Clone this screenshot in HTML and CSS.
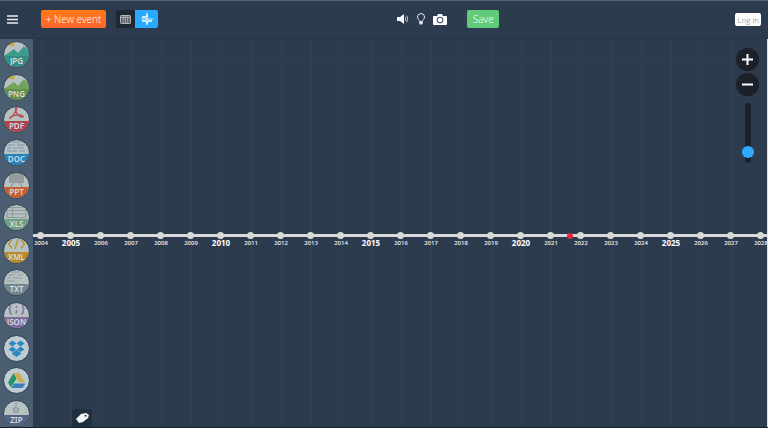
FILE: index.html
```html
<!DOCTYPE html>
<html lang="en">
<head>
<meta charset="utf-8">
<title>Timeline editor</title>
<link rel="stylesheet" href="styles.css">
</head>
<body>
<header class="topbar">
  <div class="group">
    <button class="icon-btn menu" aria-label="Menu"><svg width="11" height="9" viewBox="0 0 11 9"><path d="M0 1h11M0 4.500h11M0 8h11" stroke="#e9edf0" stroke-width="1.300"/></svg></button>
    <button class="btn btn-new">+ New event</button>
    <div class="views">
      <button class="view" aria-label="Table view"><svg width="11" height="9" viewBox="0 0 11 9"><rect x=".5" y=".5" width="10" height="8" rx=".7" fill="#59616a" stroke="#b1b6bb"/><path d="M3.300 1v8M5.500 1v8M7.700 1v8M1 2.500h9" stroke="#b1b6bb" stroke-width=".8"/></svg></button>
      <button class="view view-on" aria-label="Timeline view"><svg width="12" height="12" viewBox="0 0 12 12"><path d="M0 6h12" stroke="#d5eeff"/><path d="M6 0v12" stroke="#fff" stroke-width="1.200"/><path d="M1 4h4M1 8h4M7 8h4M6 2v2M6 8.500v2" stroke="#fff" stroke-width="1.600"/></svg></button>
    </div>
  </div>
  <div class="group group-mid">
    <button class="icon-btn" aria-label="Sound"><svg width="12" height="10" viewBox="0 0 12 10"><path d="M0 3h3l4-3v10L3 7H0z" fill="#f4f6f7"/><path d="M8.200 3q1.300 2 0 4M9.700 1.700q2.200 3.300 0 6.600" fill="none" stroke="#b8c2ca"/></svg></button>
    <button class="icon-btn" aria-label="Tips"><svg width="8" height="12" viewBox="1 0 8 12"><path d="M3.500 8.500C3.500 6.700 1.500 6.200 1.500 4a3.500 3.500 0 0 1 7 0c0 2.200-2 2.700-2 4.500z" fill="none" stroke="#e0e6ea"/><path d="M3.300 9h3.400v1.500L6 11.500H4l-.7-1z" fill="#e0e6ea"/></svg></button>
    <button class="icon-btn" aria-label="Screenshot"><svg width="14" height="11" viewBox="0 0 14 11"><path d="M1 2h3l1-2h4l1 2h3q1 0 1 1v7q0 1-1 1H1q-1 0-1-1V3q0-1 1-1z" fill="#fff"/><circle cx="7" cy="6" r="2.800" fill="none" stroke="#46566a" stroke-width="1.100"/></svg></button>
    <button class="btn btn-save">Save</button>
  </div>
  <a class="login" href="#login">Log in</a>
</header>
<div class="workspace">
  <nav class="sources" aria-label="Export and import">
    <button class="source c-jpg"><svg class="art" viewBox="0 0 25 25"><circle cx="8" cy="2" r="2.500" fill="#c9a83d"/><path d="M0 16V14L10 7l4 4 6-7 5 5v7z" fill="#3b9c8e"/></svg><span class="kind">JPG</span></button>
    <button class="source c-png"><svg class="art" viewBox="0 0 25 25"><circle cx="8" cy="2" r="2.500" fill="#c9a83d"/><path d="M0 16V14L10 7l4 4 6-7 5 5v7z" fill="#74a35b"/></svg><span class="kind">PNG</span></button>
    <button class="source c-pdf"><svg class="art" viewBox="0 0 25 25"><path d="M6 11c1-3 11-4 13-2 1 2-3 1-5-1-3-3-3-8-1.500-8S11 7 7 10.500Q5.500 12 6 10" fill="none" stroke="#b84f55" stroke-width="1.400"/></svg><span class="kind">PDF</span></button>
    <button class="source c-doc"><svg class="art" viewBox="0 0 25 25"><path d="M7 2h11M4 5h7M13 5h8M3 8h4M9 8h11M3 11h10M15 11h6" stroke="#8295b5" stroke-width="1.200"/></svg><span class="kind">DOC</span></button>
    <button class="source c-ppt"><svg class="art" viewBox="0 0 25 25"><path d="M5 1h15v9H5z" fill="#969c9e"/><path d="M12 0v1M9 10l-2 4M16 10l2 4" stroke="#969c9e" stroke-width="1.300"/></svg><span class="kind">PPT</span></button>
    <button class="source c-xls"><svg class="art" viewBox="0 0 25 25"><path d="M3 2.500h19v10H3zM3 5.500h19M3 9h19M8.500 2.500v10" fill="none" stroke="#8e9b9d" stroke-width="1.200"/></svg><span class="kind">XLS</span></button>
    <button class="source c-xml"><svg class="art" viewBox="0 0 25 25"><path d="M8 1.500L4.500 6 8 10.500M17 1.500L20.500 6 17 10.500M14 1l-3 10" fill="none" stroke="#bf9439" stroke-width="1.500"/></svg><span class="kind">XML</span></button>
    <button class="source c-txt"><svg class="art" viewBox="0 0 25 25"><path d="M7 2h9M4 5h7M13 5h6M3 8h4M9 8h9M3 11h8" stroke="#929b9d" stroke-width="1.200"/></svg><span class="kind">TXT</span></button>
    <button class="source c-json"><svg class="art" viewBox="0 0 25 25"><path d="M8 1Q6 1 6 3v1.500Q6 6 4.500 6 6 6 6 7.500V9q0 2 2 2M17 1q2 0 2 2v1.500Q19 6 20.500 6 19 6 19 7.500V9q0 2-2 2M12.500 3v2M12.500 7v2.500l-1 1" fill="none" stroke="#83709c" stroke-width="1.500"/></svg><span class="kind">JSON</span></button>
    <button class="source c-cloud" aria-label="Dropbox"><svg class="art" viewBox="0 0 25 25"><path d="M8.500 4.500l4 3-4 3-4-3zM16.500 4.500l4 3-4 3-4-3zM8.500 10.500l4 3-4 2.500-4-2.500zM16.500 10.500l4 3-4 2.500-4-2.500zM8 17l4.500-3 4.500 3v1l-4.500 3L8 18z" fill="#2b88bd"/><path d="M12.500 7.500l4 3-4 3-4-3z" fill="#bdcbd2"/></svg></button>
    <button class="source c-cloud" aria-label="Google Drive"><svg class="art" viewBox="0 0 25 25"><path d="M9.500 5l3 5.500-5.500 9-3-5z" fill="#279468"/><path d="M9.500 5h6l5.500 9.500h-6z" fill="#c9b052"/><path d="M10 15.500h11.500l-3 4.500H7.500z" fill="#397fc0"/></svg></button>
    <button class="source c-zip"><svg class="art" viewBox="0 0 25 25"><path d="M12 0v6" stroke="#8e9699" stroke-width="2" stroke-dasharray="1 1"/><circle cx="12" cy="9" r="2.300" fill="none" stroke="#8e9699" stroke-width="1.500"/></svg><span class="kind">ZIP</span></button>
  </nav>
  <main class="canvas">
    <ol class="years">
      <li>2004</li><li class="major">2005</li><li>2006</li><li>2007</li><li>2008</li>
      <li>2009</li><li class="major">2010</li><li>2011</li><li>2012</li><li>2013</li>
      <li>2014</li><li class="major">2015</li><li>2016</li><li>2017</li><li>2018</li>
      <li>2019</li><li class="major">2020</li><li class="now">2021</li><li>2022</li><li>2023</li>
      <li>2024</li><li class="major">2025</li><li>2026</li><li>2027</li><li>2028</li>
    </ol>
    <div class="zoom">
      <button class="round" aria-label="Zoom in"><svg width="11" height="11" viewBox="0 0 11 11"><path d="M0 5.500h11M5.500 0v11" stroke="#fff" stroke-width="2"/></svg></button>
      <button class="round" aria-label="Zoom out"><svg width="11" height="11" viewBox="0 0 11 11"><path d="M0 5.500h11" stroke="#fff" stroke-width="2"/></svg></button>
      <input class="level" type="range" min="0" max="100" value="10" aria-label="Zoom level">
    </div>
    <button class="tag" aria-label="Tags"><svg width="13" height="11" viewBox="0 0 13 11"><path d="M0 6l5-5 5-1 3 2-1 3-5 4-4 1z" fill="#f3f5f6"/><circle cx="9.500" cy="2.800" r="1" fill="#263442"/></svg></button>
  </main>
</div>
</body>
</html>
```
FILE: styles.css
```css
* { box-sizing: border-box; }

body {
  margin: 0;
  height: 100vh;
  display: flex;
  flex-direction: column;
  overflow: hidden;
  background: #2d3b4e;
  border-bottom: 1px solid #17202e;
  font-family: "Open Sans", "Noto Sans", sans-serif;
}

button {
  display: flex;
  align-items: center;
  justify-content: center;
  padding: 0;
  border: 0;
  font: inherit;
  color: #fff;
  background: none;
}

svg { display: block; }

.topbar {
  flex: none;
  height: 39px;
  display: flex;
  align-items: center;
  justify-content: space-between;
  padding: 0 7px 1px;
  border-top: 1px solid #50667a;
  border-bottom: 1px solid #263445;
}

.group { display: flex; align-items: center; }
.group-mid { gap: 8px; padding-left: 3px; }
.menu { margin-right: 23px; }

.btn {
  height: 18px;
  border-radius: 2px;
  font-size: 10px;
  font-weight: 300;
}

.btn-new {
  width: 65px;
  margin-right: 10px;
  background: linear-gradient(#ff7a10, #fc6730);
}

.btn-save {
  width: 32px;
  margin-left: 12px;
  background: #62cb7a;
}

.views {
  display: flex;
  border-radius: 2px;
  overflow: hidden;
}

.view { width: 19px; height: 18px; background: #1e2935; }
.view-on { width: 23px; background: #27aaff; }

.login {
  padding: 0 2px;
  border-radius: 2px;
  background: #fff;
  color: #666;
  font-size: 8px;
  font-weight: 300;
  line-height: 13px;
  text-decoration: none;
}

.workspace { flex: 1; min-height: 0; display: flex; }

.sources {
  width: 33px;
  flex: none;
  display: flex;
  flex-direction: column;
  align-items: center;
  justify-content: space-between;
  padding-top: 2px;
  background: #4b5e71;
}

.source {
  position: relative;
  width: 27px;
  height: 27px;
  border: 1px solid #2b3c50;
  border-radius: 50%;
  overflow: hidden;
  align-items: flex-end;
  background: #b6c1c2;
}

.art { position: absolute; inset: 0; }

.kind {
  position: relative;
  flex: 1;
  height: 11px;
  font-family: "Noto Sans", sans-serif;
  font-size: 8px;
  line-height: 10px;
  font-weight: 600;
  text-align: center;
  color: #d5dddf;
}

.c-jpg .kind { background: #358d82; }
.c-png .kind { background: #618d4d; }
.c-pdf .kind { background: #ae454d; }
.c-doc .kind { background: #2384bd; }
.c-ppt .kind { background: #c35f34; }
.c-xls .kind { background: #719f86; }
.c-xml .kind { background: #b98a2d; }
.c-txt .kind { background: #728790; }
.c-json .kind { background: #806b9b; }
.c-zip .kind { background: #536480; }
.c-cloud { background: #bdcbd2; }

.canvas {
  position: relative;
  flex: 1;
  min-width: 0;
  overflow: hidden;
  border-right: 1px solid #dce2e6;
  background: linear-gradient(#314151, #314151) 0 20px / 100% 1px no-repeat, #2d3b4e;
}

.years {
  height: 100%;
  display: flex;
  margin: 0 -9px 0 -7px;
  padding: 0;
  list-style: none;
}

.years li {
  position: relative;
  flex: 1 1 0;
  min-width: 0;
  display: flex;
  flex-direction: column;
  align-items: center;
  justify-content: center;
  padding-top: 19px;
  font-size: 6px;
  line-height: 10px;
  font-weight: 600;
  color: #e9edf0;
  background:
    linear-gradient(#d9d9d9, #d9d9d9) 0 calc(50% + 2px) / 100% 3px no-repeat,
    linear-gradient(#314151, #314151) 50% 0 / 1px 100% no-repeat;
}

.years li::before,
.now::after {
  content: "";
  position: absolute;
  top: calc(50% - 1px);
  left: calc(50% - 4px);
  width: 7px;
  height: 7px;
  border-radius: 50%;
  background: #d9d9d9;
}

.years .major { font-size: 8px; font-weight: 700; color: #fff; }

/* Today's marker lies over the following column. */
.years .now { z-index: 1; }

.now::after {
  top: 50%;
  left: calc(100% + 1px);
  width: 6px;
  height: 6px;
  background: #e8283c;
}

.zoom {
  position: absolute;
  top: 9px;
  right: 8px;
  display: flex;
  flex-direction: column;
  align-items: center;
  gap: 2px;
}

.round {
  width: 23px;
  height: 23px;
  border-radius: 50%;
  background: #1b2129;
}

.level {
  appearance: none;
  writing-mode: vertical-lr;
  direction: rtl;
  width: 12px;
  height: 60px;
  margin: 5px 0 0;
  background: none;
}

.level::-webkit-slider-runnable-track {
  width: 6px;
  border-radius: 3px;
  background: #1b2129;
}

.level::-webkit-slider-thumb {
  appearance: none;
  width: 12px;
  height: 12px;
  margin-left: -3px;
  border-radius: 50%;
  background: #31abff;
}

.tag {
  position: absolute;
  left: 39px;
  bottom: 0;
  width: 20px;
  height: 18px;
  border-radius: 2px 2px 0 0;
  background: #213040;
}
```
